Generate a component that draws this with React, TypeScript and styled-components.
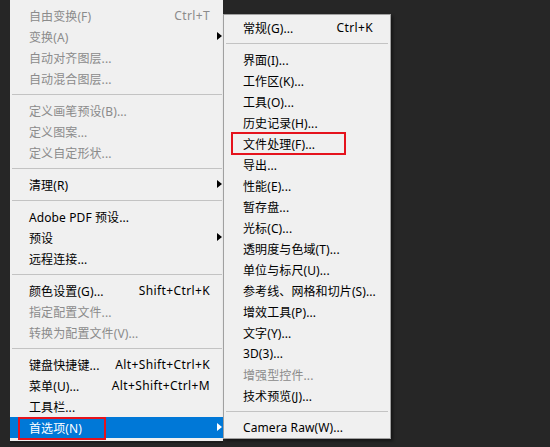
import React from "react";
import styled, { createGlobalStyle } from "styled-components";

const Global = createGlobalStyle`
  html, body { margin: 0; padding: 0; background: #262626; }
  body { font-family: "Noto Sans", "Noto Sans CJK SC", sans-serif; }
`;

const Screen = styled.div`
  width: 550px;
  height: 447px;
  overflow: hidden;
  background: #262626;
  display: flex;
  align-items: flex-start;
`;

const MainMenu = styled.div`
  margin-left: 10px;
  width: 213px;
  padding: 5px 0 3px;
  background: #f0f0f0;
  display: flex;
  flex-direction: column;
  box-sizing: border-box;
  box-shadow: 0 2px 0 #1c1c1c;
`;

const SubMenu = styled.div`
  margin-top: 14px;
  width: 168px;
  padding: 2px 0 0;
  background: #f0f0f0;
  border: 1px solid #a0a0a0;
  box-sizing: border-box;
  display: flex;
  flex-direction: column;
  box-shadow: 2px 2px 3px rgba(0, 0, 0, 0.45);
`;

const Row = styled.div<{ $disabled?: boolean; $active?: boolean; $indent: number; $right: number }>`
  position: relative;
  height: 21px;
  display: flex;
  align-items: center;
  padding-left: ${(p) => p.$indent}px;
  padding-right: ${(p) => p.$right}px;
  font-size: 12px;
  white-space: nowrap;
  color: ${(p) => (p.$active ? "#ffffff" : p.$disabled ? "#8b8b8b" : "#000000")};
  background: ${(p) => (p.$active ? "#0078d7" : "transparent")};
`;

const Label = styled.span`
  flex: 1;
  letter-spacing: 0.1px;
`;

const Shortcut = styled.span`
  text-align: right;
  letter-spacing: 0.38px;
`;

const Arrow = styled.span<{ $active?: boolean }>`
  position: absolute;
  right: 1px;
  top: 6px;
  width: 0;
  height: 0;
  border-top: 4px solid transparent;
  border-bottom: 4px solid transparent;
  border-left: 5px solid ${(p) => (p.$active ? "#ffffff" : "#000000")};
`;

const Separator = styled.div<{ $inset: number; $insetRight: number }>`
  height: 11px;
  display: flex;
  align-items: center;
  padding: 0 ${(p) => p.$insetRight}px 0 ${(p) => p.$inset}px;
  &::after {
    content: "";
    flex: 1;
    height: 1px;
    background: #c3c3c3;
  }
`;

const Highlight = styled.div<{ $left: number; $top: number; $w: number }>`
  position: absolute;
  left: ${(p) => p.$left}px;
  top: ${(p) => p.$top}px;
  width: ${(p) => p.$w}px;
  height: 23px;
  border: 2px solid #e5131d;
  box-sizing: border-box;
  pointer-events: none;
`;

type Item =
  | { sep: true }
  | {
      sep?: false;
      label: string;
      shortcut?: string;
      disabled?: boolean;
      sub?: boolean;
      active?: boolean;
      box?: { left: number; top: number; w: number };
    };

const mainItems: Item[] = [
  { label: "自由变换(F)", shortcut: "Ctrl+T", disabled: true },
  { label: "变换(A)", disabled: true, sub: true },
  { label: "自动对齐图层...", disabled: true },
  { label: "自动混合图层...", disabled: true },
  { sep: true },
  { label: "定义画笔预设(B)...", disabled: true },
  { label: "定义图案...", disabled: true },
  { label: "定义自定形状...", disabled: true },
  { sep: true },
  { label: "清理(R)", sub: true },
  { sep: true },
  { label: "Adobe PDF 预设..." },
  { label: "预设", sub: true },
  { label: "远程连接..." },
  { sep: true },
  { label: "颜色设置(G)...", shortcut: "Shift+Ctrl+K" },
  { label: "指定配置文件...", disabled: true },
  { label: "转换为配置文件(V)...", disabled: true },
  { sep: true },
  { label: "键盘快捷键...", shortcut: "Alt+Shift+Ctrl+K" },
  { label: "菜单(U)...", shortcut: "Alt+Shift+Ctrl+M" },
  { label: "工具栏..." },
  { label: "首选项(N)", sub: true, active: true, box: { left: 8, top: 0, w: 88 } },
];

const subItems: Item[] = [
  { label: "常规(G)...", shortcut: "Ctrl+K" },
  { sep: true },
  { label: "界面(I)..." },
  { label: "工作区(K)..." },
  { label: "工具(O)..." },
  { label: "历史记录(H)..." },
  { label: "文件处理(F)...", box: { left: 7, top: -1, w: 115 } },
  { label: "导出..." },
  { label: "性能(E)..." },
  { label: "暂存盘..." },
  { label: "光标(C)..." },
  { label: "透明度与色域(T)..." },
  { label: "单位与标尺(U)..." },
  { label: "参考线、网格和切片(S)..." },
  { label: "增效工具(P)..." },
  { label: "文字(Y)..." },
  { label: "3D(3)..." },
  { label: "增强型控件...", disabled: true },
  { label: "技术预览(J)..." },
  { sep: true },
  { label: "Camera Raw(W)..." },
];

function renderItems(items: Item[], indent: number, right: number, sepL: number, sepR: number) {
  return items.map((it, i) =>
    it.sep ? (
      <Separator key={i} $inset={sepL} $insetRight={sepR} />
    ) : (
      <Row key={i} $disabled={it.disabled} $active={it.active} $indent={indent} $right={right}>
        <Label>{it.label}</Label>
        {it.shortcut && <Shortcut>{it.shortcut}</Shortcut>}
        {it.sub && <Arrow $active={it.active} />}
        {it.box && <Highlight $left={it.box.left} $top={it.box.top} $w={it.box.w} />}
      </Row>
    )
  );
}

export default function App() {
  return (
    <>
      <Global />
      <Screen>
        <MainMenu>{renderItems(mainItems, 19, 13, 2, 1)}</MainMenu>
        <SubMenu>{renderItems(subItems, 19, 17, 2, 2)}</SubMenu>
      </Screen>
    </>
  );
}
